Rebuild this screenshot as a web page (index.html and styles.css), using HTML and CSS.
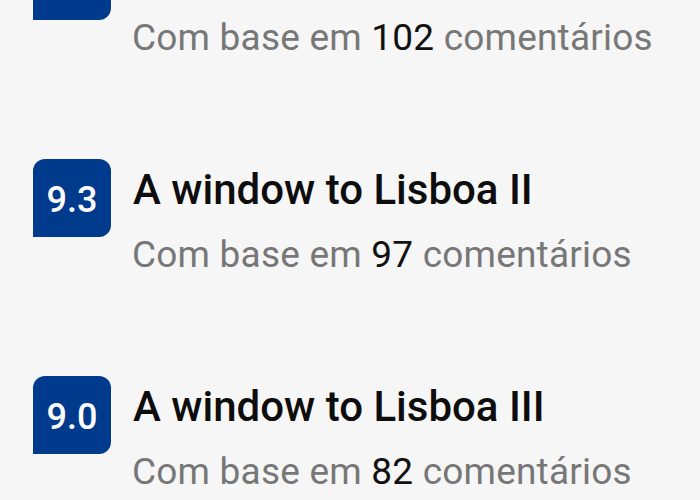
FILE: index.html
```html
<!DOCTYPE html>
<html lang="pt">
<head>
<meta charset="utf-8">
<link rel="stylesheet" href="styles.css">
</head>
<body>
<ul class="list">
  <li class="item">
    <div class="score"></div>
    <div class="info">
      <div class="title"></div>
      <div class="reviews">Com base em <span class="count">102</span> comentários</div>
    </div>
  </li>
  <li class="item">
    <div class="score">9.3</div>
    <div class="info">
      <div class="title">A window to Lisboa II</div>
      <div class="reviews">Com base em <span class="count">97</span> comentários</div>
    </div>
  </li>
  <li class="item">
    <div class="score">9.0</div>
    <div class="info">
      <div class="title">A window to Lisboa III</div>
      <div class="reviews">Com base em <span class="count">82</span> comentários</div>
    </div>
  </li>
</ul>
</body>
</html>
```

FILE: styles.css
```css
html, body {
  margin: 0;
  padding: 0;
  background: #f6f6f6;
  font-family: Roboto, "Liberation Sans", sans-serif;
  overflow: hidden;
}

.list {
  list-style: none;
  margin: -58px 0 0 0;
  padding: 0 0 0 33px;
}

.item {
  display: flex;
  align-items: flex-start;
  gap: 21px;
  height: 217px;
}

.item:last-child {
  height: auto;
}

.score {
  flex: none;
  width: 78px;
  height: 78px;
  box-sizing: border-box;
  padding-top: 3px;
  display: flex;
  align-items: center;
  justify-content: center;
  background: #003a8c;
  color: #ffffff;
  font-size: 36px;
  font-weight: 500;
  border-radius: 12px 12px 12px 0;
}

.info {
  padding-top: 5px;
}

.title {
  min-height: 52.8px;
  padding-left: 1px;
  font-size: 42px;
  line-height: 52.8px;
  font-weight: 500;
  color: #0d0d0d;
}

.reviews {
  margin-top: 16px;
  font-size: 37px;
  line-height: 43.2px;
  letter-spacing: 0.2px;
  color: #777777;
}

.count {
  color: #111111;
}
```
